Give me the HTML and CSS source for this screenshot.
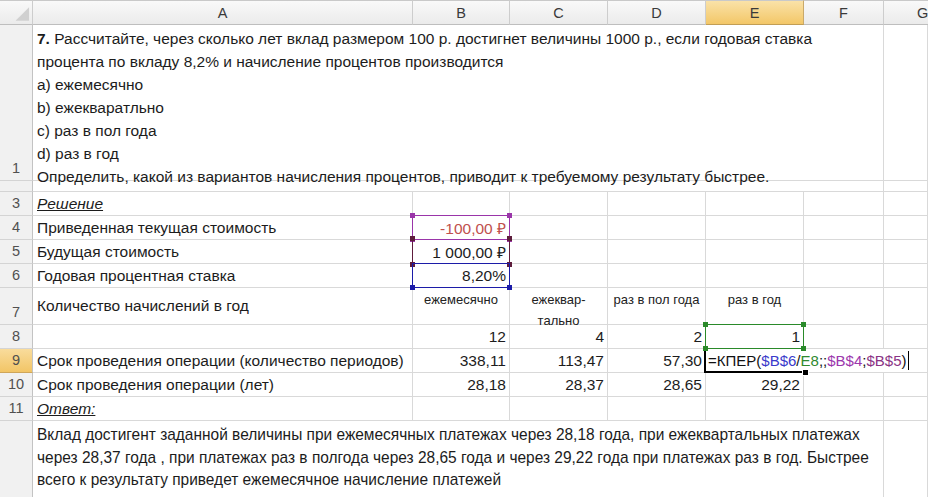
FILE: index.html
```html
<!DOCTYPE html>
<html lang="ru">
<head>
<meta charset="utf-8">
<title>Excel</title>
<link rel="stylesheet" href="styles.css">
</head>
<body>
<div class="sheet">
  <div class="h corner"><svg width="33" height="25" viewBox="0 0 33 25"><polygon points="30,6 30,20 16,20" fill="#d0d0d0"/></svg></div>
  <div class="h">A</div>
  <div class="h">B</div>
  <div class="h">C</div>
  <div class="h">D</div>
  <div class="h sel">E</div>
  <div class="h">F</div>
  <div class="h g">G</div>

  <div class="rh">1</div>
  <div class="c m6 task"><div class="txt"><b>7.</b> Рассчитайте, через сколько лет вклад размером 100 р. достигнет величины 1000 р., если годовая ставка<br>процента по вкладу 8,2% и начисление процентов производится<br>a) ежемесячно<br>b) ежекваратльно<br>c) раз в пол года<br>d) раз в год<br>Определить, какой из вариантов начисления процентов, приводит к требуемому результату быстрее.</div></div>
  <div class="c"></div>

  <div class="rh r2"><span>2</span></div>
  <div class="c m6"></div>
  <div class="c"></div>

  <div class="rh">3</div>
  <div class="c"><span class="iu">Решение</span></div>
  <div class="c"></div><div class="c"></div><div class="c"></div><div class="c"></div><div class="c"></div><div class="c"></div>

  <div class="rh">4</div>
  <div class="c">Приведенная текущая стоимость</div>
  <div class="c num ref-cell"><span class="neg">-100,00 ₽</span><i class="ref purple"><s class="k tl"></s><s class="k tr"></s><s class="k bl"></s><s class="k br"></s></i></div>
  <div class="c"></div><div class="c"></div><div class="c"></div><div class="c"></div><div class="c"></div>

  <div class="rh">5</div>
  <div class="c">Будущая стоимость</div>
  <div class="c num ref-cell">1 000,00 ₽<i class="ref maroon"><s class="k tl"></s><s class="k tr"></s><s class="k bl"></s><s class="k br"></s></i></div>
  <div class="c"></div><div class="c"></div><div class="c"></div><div class="c"></div><div class="c"></div>

  <div class="rh">6</div>
  <div class="c">Годовая процентная ставка</div>
  <div class="c num ref-cell">8,20%<i class="ref blue"><s class="k bl"></s><s class="k br"></s></i></div>
  <div class="c"></div><div class="c"></div><div class="c"></div><div class="c"></div><div class="c"></div>

  <div class="rh">7</div>
  <div class="c">Количество начислений в год</div>
  <div class="c lbl">ежемесячно</div>
  <div class="c lbl">ежеквар-<br>тально</div>
  <div class="c lbl">раз в пол года</div>
  <div class="c lbl">раз в год</div>
  <div class="c"></div><div class="c"></div>

  <div class="rh">8</div>
  <div class="c"></div>
  <div class="c num">12</div>
  <div class="c num">4</div>
  <div class="c num">2</div>
  <div class="c num ref-cell">1<i class="ref green"><s class="k tl"></s><s class="k tr"></s><s class="k bl"></s><s class="k br"></s></i></div>
  <div class="c"></div><div class="c"></div>

  <div class="rh sel">9</div>
  <div class="c">Срок проведения операции (количество периодов)</div>
  <div class="c num">338,11</div>
  <div class="c num">113,47</div>
  <div class="c num">57,30</div>
  <div class="c active"><i class="editor">=КПЕР(<span class="f-blue">$B$6</span>/<span class="f-green">E8</span>;;<span class="f-purple">$B$4</span>;<span class="f-maroon">$B$5</span>)<span class="caret"></span></i><i class="act-border"></i><i class="handle"></i></div>
  <div class="c"></div><div class="c"></div>

  <div class="rh">10</div>
  <div class="c">Срок проведения операции (лет)</div>
  <div class="c num">28,18</div>
  <div class="c num">28,37</div>
  <div class="c num">28,65</div>
  <div class="c num">29,22</div>
  <div class="c"></div><div class="c"></div>

  <div class="rh">11</div>
  <div class="c"><span class="iu">Ответ:</span></div>
  <div class="c"></div><div class="c"></div><div class="c"></div><div class="c"></div><div class="c"></div><div class="c"></div>

  <div class="rh last"></div>
  <div class="c m6 answer last"><span class="narrow">Вклад достигент заданной величины при ежемесячных платежах через 28,18 года, при ежеквартальных платежах<br>через 28,37 года , при платежах раз в полгода через 28,65 года и через 29,22 года при платежах раз в год. Быстрее<br>всего к результату приведет ежемесячное начисление платежей</span></div>
  <div class="c last"></div>
</div>
</body>
</html>
```

FILE: styles.css
```css
html, body {
  margin: 0;
  padding: 0;
  background: #ffffff;
  overflow: hidden;
}
body {
  font-family: "Liberation Sans", Arial, sans-serif;
  font-size: 15.5px;
  color: #1c1c1c;
}
.sheet {
  display: grid;
  grid-template-columns: 33px 380px 97px 98px 98px 98px 80px 44px;
  grid-template-rows: 25px 156px 11px repeat(4, 24px) 37px repeat(4, 24px) 76px;
  width: 928px;
  overflow: hidden;
}
.c {
  box-sizing: border-box;
  border-right: 1px solid #d9d9d9;
  border-bottom: 1px solid #d9d9d9;
  display: flex;
  align-items: center;
  padding: 0 3px 0 4px;
  white-space: nowrap;
  min-width: 0;
  position: relative;
}
.m6 { grid-column: span 6; }
.last { border-bottom: 0; }

/* headers */
.h {
  box-sizing: border-box;
  background: linear-gradient(#f9f9f9, #ebebeb);
  border-top: 1px solid #c9c9c9;
  border-right: 1px solid #cdcdcd;
  border-bottom: 1px solid #bebebe;
  color: #3a3a3a;
  font-size: 14.5px;
  display: flex;
  align-items: center;
  justify-content: center;
}
.h.sel {
  background: linear-gradient(#fae2a8, #f3c768);
  border-right-color: #c9a96a;
  border-bottom-color: #c29e55;
}
.h.g {
  justify-content: flex-start;
  padding-left: 33px;
  border-right: 0;
  overflow: hidden;
}
.corner {
  padding: 0;
  align-items: stretch;
  justify-content: stretch;
}
.corner svg { display: block; }
.rh {
  box-sizing: border-box;
  background: #f1f1f1;
  border-right: 1px solid #c3c3c3;
  border-bottom: 1px solid #d4d4d4;
  color: #505050;
  font-size: 14.5px;
  display: flex;
  align-items: flex-end;
  justify-content: center;
  line-height: 23px;
  overflow: hidden;
}
.rh.last { border-bottom: 0; }
.rh.sel {
  background: linear-gradient(#f9dc9c, #f2c566);
  border-bottom-color: #cfa65a;
}
.rh.r2 { align-items: flex-start; }
.rh.r2 span { margin-top: -17px; }

/* content */
.task {
  align-items: flex-start;
  padding-top: 2px;
  line-height: 23px;
  z-index: 1;
}
.task b { font-weight: bold; }
.iu {
  font-style: italic;
  text-decoration: underline;
}
.num { justify-content: flex-end; }
.neg { color: #c0504d; }
.lbl {
  align-items: flex-start;
  justify-content: center;
  text-align: center;
  font-size: 13px;
  line-height: 21px;
  padding: 1px 0 0 0;
  white-space: normal;
  color: #222;
}
.answer {
  align-items: flex-start;
  padding-top: 3px;
  line-height: 22.5px;
}
.narrow {
  display: inline-block;
  font-size: 17px;
  transform: scaleX(0.91);
  transform-origin: 0 0;
}

/* reference highlight boxes */
.ref {
  position: absolute;
  left: -1px;
  top: -1px;
  right: -1px;
  bottom: -1px;
  border: 1px solid;
  z-index: 2;
  pointer-events: none;
}
.ref .k {
  position: absolute;
  width: 5px;
  height: 5px;
  background: currentColor;
}
.k.tl { left: -3px; top: -3px; }
.k.tr { right: -3px; top: -3px; }
.k.bl { left: -3px; bottom: -3px; }
.k.br { right: -3px; bottom: -3px; }
.purple { color: #9a35a9; border-color: #9a35a9; }
.maroon { color: #5e1d3c; border-color: #5e1d3c; border-top: 0; border-bottom: 0; }
.blue { color: #1c1ca8; border-color: #1c1ca8; }
.green { color: #2a8a2a; border-color: #2a8a2a; z-index: 4; }

/* active editing cell */
.active { padding: 0; }
.editor {
  position: absolute;
  left: 0;
  top: 0;
  width: 208px;
  height: 23px;
  background: #ffffff;
  font-style: normal;
  font-size: 15px;
  display: flex;
  align-items: center;
  padding-left: 2px;
  box-sizing: border-box;
  z-index: 3;
  color: #111;
}
.f-blue { color: #3a3acb; }
.f-green { color: #2f8a2f; }
.f-purple { color: #9b37ad; }
.f-maroon { color: #8a3385; }
.caret {
  display: inline-block;
  width: 1px;
  height: 19px;
  background: #000;
  margin-left: 2px;
}
.act-border {
  position: absolute;
  left: -2px;
  top: -1px;
  width: 99px;
  bottom: -1px;
  border-left: 2px solid #000;
  border-bottom: 2px solid #000;
  box-sizing: border-box;
  z-index: 3;
}
.handle {
  position: absolute;
  left: 96px;
  bottom: -4px;
  width: 5px;
  height: 5px;
  background: #000;
  border: 1px solid #fff;
  z-index: 4;
}
```
